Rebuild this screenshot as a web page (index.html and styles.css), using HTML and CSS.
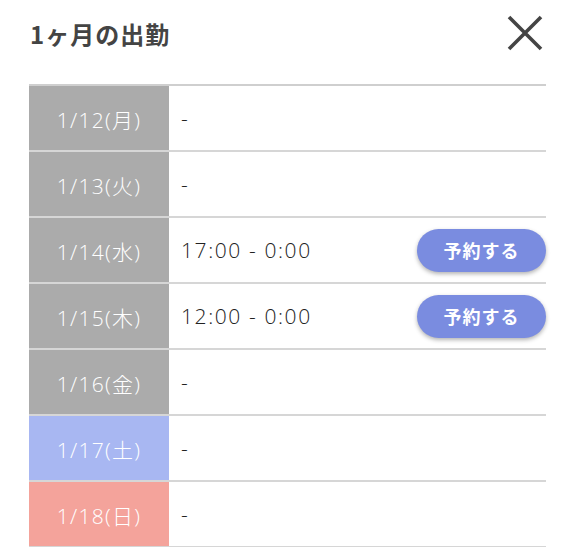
FILE: index.html
```html
<!DOCTYPE html>
<html lang="ja">
<head>
<meta charset="utf-8">
<link rel="stylesheet" href="styles.css">
</head>
<body>
<div class="header">
  <h1 class="title">1ヶ月の出勤</h1>
  <svg class="close" width="36" height="36" viewBox="0 0 36 36"><path d="M2 2 L34 34 M34 2 L2 34" stroke="#444" stroke-width="3.6" fill="none"/></svg>
</div>
<div class="table">
  <div class="row"><div class="date">1/12(月)</div><div class="info">-</div></div>
  <div class="row"><div class="date">1/13(火)</div><div class="info">-</div></div>
  <div class="row"><div class="date">1/14(水)</div><div class="info"><span>17:00 - 0:00</span><button class="btn">予約する</button></div></div>
  <div class="row"><div class="date">1/15(木)</div><div class="info"><span>12:00 - 0:00</span><button class="btn">予約する</button></div></div>
  <div class="row"><div class="date">1/16(金)</div><div class="info">-</div></div>
  <div class="row"><div class="date sat">1/17(土)</div><div class="info">-</div></div>
  <div class="row"><div class="date sun">1/18(日)</div><div class="info">-</div></div>
</div>
</body>
</html>
```
FILE: styles.css
```css
html, body {
  margin: 0;
  padding: 0;
  background: #fff;
  font-family: "Open Sans", "Noto Sans CJK JP", sans-serif;
}
.header {
  height: 84px;
  display: flex;
  align-items: center;
  justify-content: space-between;
  padding: 0 33px 18px 30px;
  box-sizing: border-box;
}
.title {
  margin: 0;
  font-size: 24px;
  font-weight: 700;
  color: #444;
  letter-spacing: 1px;
  font-family: "Noto Sans CJK JP", sans-serif;
}
.close {
  display: block;
}
.table {
  margin-left: 29px;
  width: 517px;
  border-top: 2px solid #cfcfcf;
}
.row {
  display: flex;
  height: 64px;
  border-bottom: 2px solid #d6d6d6;
}
.date {
  width: 140px;
  flex: none;
  background: #ababab;
  color: #fff;
  font-size: 21px;
  font-weight: 300;
  letter-spacing: 1.3px;
  display: flex;
  align-items: center;
  justify-content: center;
  padding-top: 2px;
  box-sizing: border-box;
}
.date.sat { background: #a8b7f2; }
.date.sun { background: #f4a39b; }
.info {
  flex: 1;
  display: flex;
  align-items: center;
  justify-content: space-between;
  padding-left: 12px;
  font-size: 21px;
  color: #222;
  font-weight: 300;
  letter-spacing: 1.6px;
}
.btn {
  width: 129px;
  height: 43px;
  border: none;
  border-radius: 22px;
  background: #7a8ce0;
  color: #fff;
  font-family: "Noto Sans CJK JP", sans-serif;
  font-size: 18px;
  font-weight: 700;
  letter-spacing: 1px;
  box-shadow: 0 2px 4px rgba(0,0,0,0.3);
  padding: 0;
}
```
